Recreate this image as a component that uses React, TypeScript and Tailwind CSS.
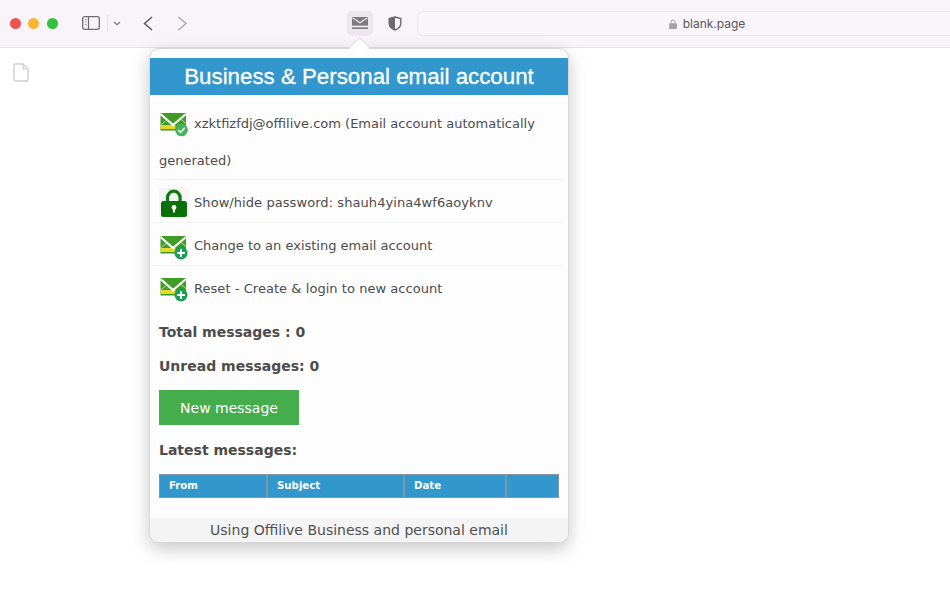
import type { FC, ReactNode } from "react";

const sans = "font-['DejaVu_Sans',Verdana,sans-serif]";

const EnvelopeBase: FC = () => (
  <>
    <path d="M1.5 3H27v17.5H1.5z" fill="#3f9c25" />
    <path d="M1.5 15h15v4H1.5z" fill="#e6d92c" />
    <path d="M1.5 4l12.5 11L27 4" fill="none" stroke="#fff" strokeWidth="2.2" />
    <path d="M1.5 15l7-5.5M27 13.5l-6-5" fill="none" stroke="#cfe8bc" strokeWidth="0.8" />
  </>
);

const MailCheck: FC = () => (
  <svg width="30" height="27" viewBox="0 0 30 27" className="shrink-0">
    <EnvelopeBase />
    <circle cx="22.5" cy="20" r="6.3" fill="#45b35a" />
    <path d="M19.2 20l2.4 2.5 4.1-4.800" fill="none" stroke="#fff" strokeWidth="1.5" />
  </svg>
);

const MailPlus: FC = () => (
  <svg width="30" height="27" viewBox="0 0 30 27" className="shrink-0">
    <EnvelopeBase />
    <circle cx="22" cy="20" r="6.5" fill="#17a055" />
    <path d="M22 16v8M18 20h8" fill="none" stroke="#fff" strokeWidth="2" />
  </svg>
);

const Lock: FC = () => (
  <svg width="30" height="30" viewBox="0 0 30 30" className="shrink-0">
    <rect width="30" height="30" fill="#f6f6f6" />
    <path d="M8.5 14V9.5a6.3 6.3 0 0 1 12.6 0V14" fill="none" stroke="#0f7a12" strokeWidth="3.2" />
    <rect x="2" y="13" width="26" height="16" rx="2.5" fill="#0a7009" />
    <circle cx="15" cy="19.5" r="2.4" fill="#fff" />
    <path d="M14 20h2v4.5h-2z" fill="#fff" />
  </svg>
);

const Toolbar: FC = () => (
  <div className="flex h-[48px] items-center border-b border-[#e6e2e8] bg-[#f8f4fa] pb-[1px]">
    <div className="ml-[9.5px] flex shrink-0 gap-[7.5px]">
      <span className="h-[11px] w-[11px] rounded-full bg-[#f5504f]" />
      <span className="h-[11px] w-[11px] rounded-full bg-[#fbb52c]" />
      <span className="h-[11px] w-[11px] rounded-full bg-[#33c23f]" />
    </div>
    <svg width="18" height="14" viewBox="0 0 18 14" fill="none" className="ml-[24.5px] shrink-0">
      <rect x="0.7" y="0.7" width="16.6" height="12.6" rx="2" stroke="#6f6c72" strokeWidth="1.3" />
      <path d="M6.5 1v12" stroke="#6f6c72" strokeWidth="1.3" />
      <path d="M3 3.5h1.5M3 6h1.5M3 8.5h1.5" stroke="#8b888e" strokeWidth="1" />
    </svg>
    <span className="ml-[7px] h-[16px] w-px shrink-0 bg-[#e4e0e6]" />
    <svg width="8" height="5" viewBox="0 0 8 5" fill="none" className="ml-[5px] shrink-0">
      <path d="M1 1l3 2.6L7 1" stroke="#77747a" strokeWidth="1.2" />
    </svg>
    <svg width="10" height="15" viewBox="0 0 10 15" fill="none" className="ml-[21.5px] shrink-0">
      <path d="M9 1L1.5 7.5 9 14" stroke="#5b585e" strokeWidth="1.5" />
    </svg>
    <svg width="10" height="15" viewBox="0 0 10 15" fill="none" className="ml-[24px] shrink-0">
      <path d="M1.5 1L9 7.5 1.500 14" stroke="#a9a6ac" strokeWidth="1.4" />
    </svg>
    <div className="ml-[160.5px] flex h-[25px] w-[26px] shrink-0 items-center justify-center rounded-[5px] bg-[#ebe7ed]">
      <svg width="16" height="12" viewBox="0 0 16 12">
        <path d="M0 0h16v8.600H0z" fill="#7e7b80" />
        <path d="M0.5 0.8L8 5.8l7.5-5" fill="none" stroke="#ebe7ed" strokeWidth="1.1" />
        <path d="M0 10.4h16V12H0z" fill="#7e7b80" />
      </svg>
    </div>
    <svg width="14" height="15" viewBox="0 0 14 15" className="ml-[15px] shrink-0">
      <path d="M7 1l5.8 1.6v5c0 3.2-2.5 5.2-5.8 6.4-3.3-1.2-5.8-3.2-5.8-6.400v-5z" fill="none" stroke="#6b686e" strokeWidth="1.4" />
      <path d="M7 1L1.2 2.6v5c0 3.2 2.5 5.2 5.8 6.400z" fill="#6b686e" />
    </svg>
    <div className="ml-[14.5px] flex h-[25px] w-[580px] shrink-0 items-center justify-center gap-[6px] rounded-l-[6px] border border-r-0 border-[#ebe6ee] bg-[#f9f5fb] pt-[1px] font-['Inter',sans-serif] text-[12px] text-[#58565a]">
      <svg width="8" height="10" viewBox="0 0 8 10">
        <path d="M2 4.5V3a2 2 0 0 1 4 0v1.5" fill="none" stroke="#a6a3a8" strokeWidth="1" />
        <rect y="4.3" width="8" height="5.7" rx="1" fill="#a6a3a8" />
      </svg>
      blank.page
    </div>
  </div>
);

const Row: FC<{ children: ReactNode; last?: boolean }> = ({ children, last }) => (
  <div className={`-mx-[5px] flex h-[43px] items-center gap-[5px] px-[5px] ${last ? "pt-[2px]" : "border-b border-[#f3f3f3] pt-[4px]"}`}>
    {children}
  </div>
);

const Popup: FC = () => (
  <div className="absolute left-[149px] top-[48px] h-[495px] w-[420px] rounded-[10px] border border-[#d8d8d8] bg-[#fdfdfd] shadow-[0_6px_18px_rgba(0,0,0,0.22)]">
    <div className="absolute left-[202px] top-[-9px] h-[15px] w-[15px] rotate-45 border-l border-t border-[#dcdcdc] bg-white" />
    <div className="relative flex h-full flex-col overflow-hidden rounded-[10px]">
      <div className="mt-[9px] flex h-[37px] items-center justify-center bg-[#3197cd] font-['Liberation_Sans',Arial,sans-serif] text-[22.3px] text-white [-webkit-text-stroke:0.3px_white]">
        Business &amp; Personal email account
      </div>
      <div className={`flex flex-1 flex-col px-[9px] text-[13px] text-[#4c4c4c] ${sans}`}>
        <div className="-mx-[5px] border-b border-[#f3f3f3] px-[5px] pb-[1px]">
          <div className="flex h-[57px] items-center gap-[5px]">
            <MailCheck />
            <span>xzktfizfdj@offilive.com (Email account automatically</span>
          </div>
          <div className="flex h-[26px] items-start leading-[17px]">generated)</div>
        </div>
        <Row>
          <Lock />
          <span className="tracking-[0.07px]">Show/hide password: shauh4yina4wf6aoyknv</span>
        </Row>
        <Row>
          <MailPlus />
          <span>Change to an existing email account</span>
        </Row>
        <Row last>
          <MailPlus />
          <span className="tracking-[0.05px]">Reset - Create &amp; login to new account</span>
        </Row>
        <div className="mt-[13px] text-[14px] font-bold leading-[20px]">Total messages : 0</div>
        <div className="mt-[14px] text-[14px] font-bold leading-[20px]">Unread messages: 0</div>
        <div className="mt-[14px] flex h-[35px] w-[140px] items-center justify-center bg-[#46ad4d] pt-[1px] text-[14px] text-white">
          New message
        </div>
        <div className="mt-[15px] text-[14px] font-bold leading-[20px]">Latest messages:</div>
        <div className="mt-[14px] flex h-[24px] w-[400px] border border-[#7f97a6] bg-[#3197cd] text-[10.2px] font-bold text-white">
          <div className="flex w-[108px] items-center border-r-2 border-[#7f97a6] pl-[9px]">From</div>
          <div className="flex w-[137px] items-center border-r-2 border-[#7f97a6] pl-[9px]">Subject</div>
          <div className="flex w-[102px] items-center border-r-2 border-[#7f97a6] pl-[9px]">Date</div>
          <div className="flex-1" />
        </div>
      </div>
      <div className={`flex h-[24px] items-center justify-center bg-[#f4f4f4] text-[14px] text-[#505050] ${sans}`}>
        Using Offilive Business and personal email
      </div>
    </div>
  </div>
);

export default function App() {
  return (
    <div className="relative h-[594px] w-[950px] overflow-hidden bg-white">
      <Toolbar />
      <div className="pl-[13px] pt-[15px]">
        <svg width="16" height="19" viewBox="0 0 16 19" fill="none">
          <path d="M1 2.5A1.5 1.5 0 0 1 2.5 1H10l5 5v10.5a1.5 1.5 0 0 1-1.5 1.5h-11A1.5 1.5 0 0 1 1 16.500z" stroke="#cfcfd2" strokeWidth="1.4" />
          <path d="M10 1v5h5" stroke="#cfcfd2" strokeWidth="1.2" />
        </svg>
      </div>
      <Popup />
    </div>
  );
}
